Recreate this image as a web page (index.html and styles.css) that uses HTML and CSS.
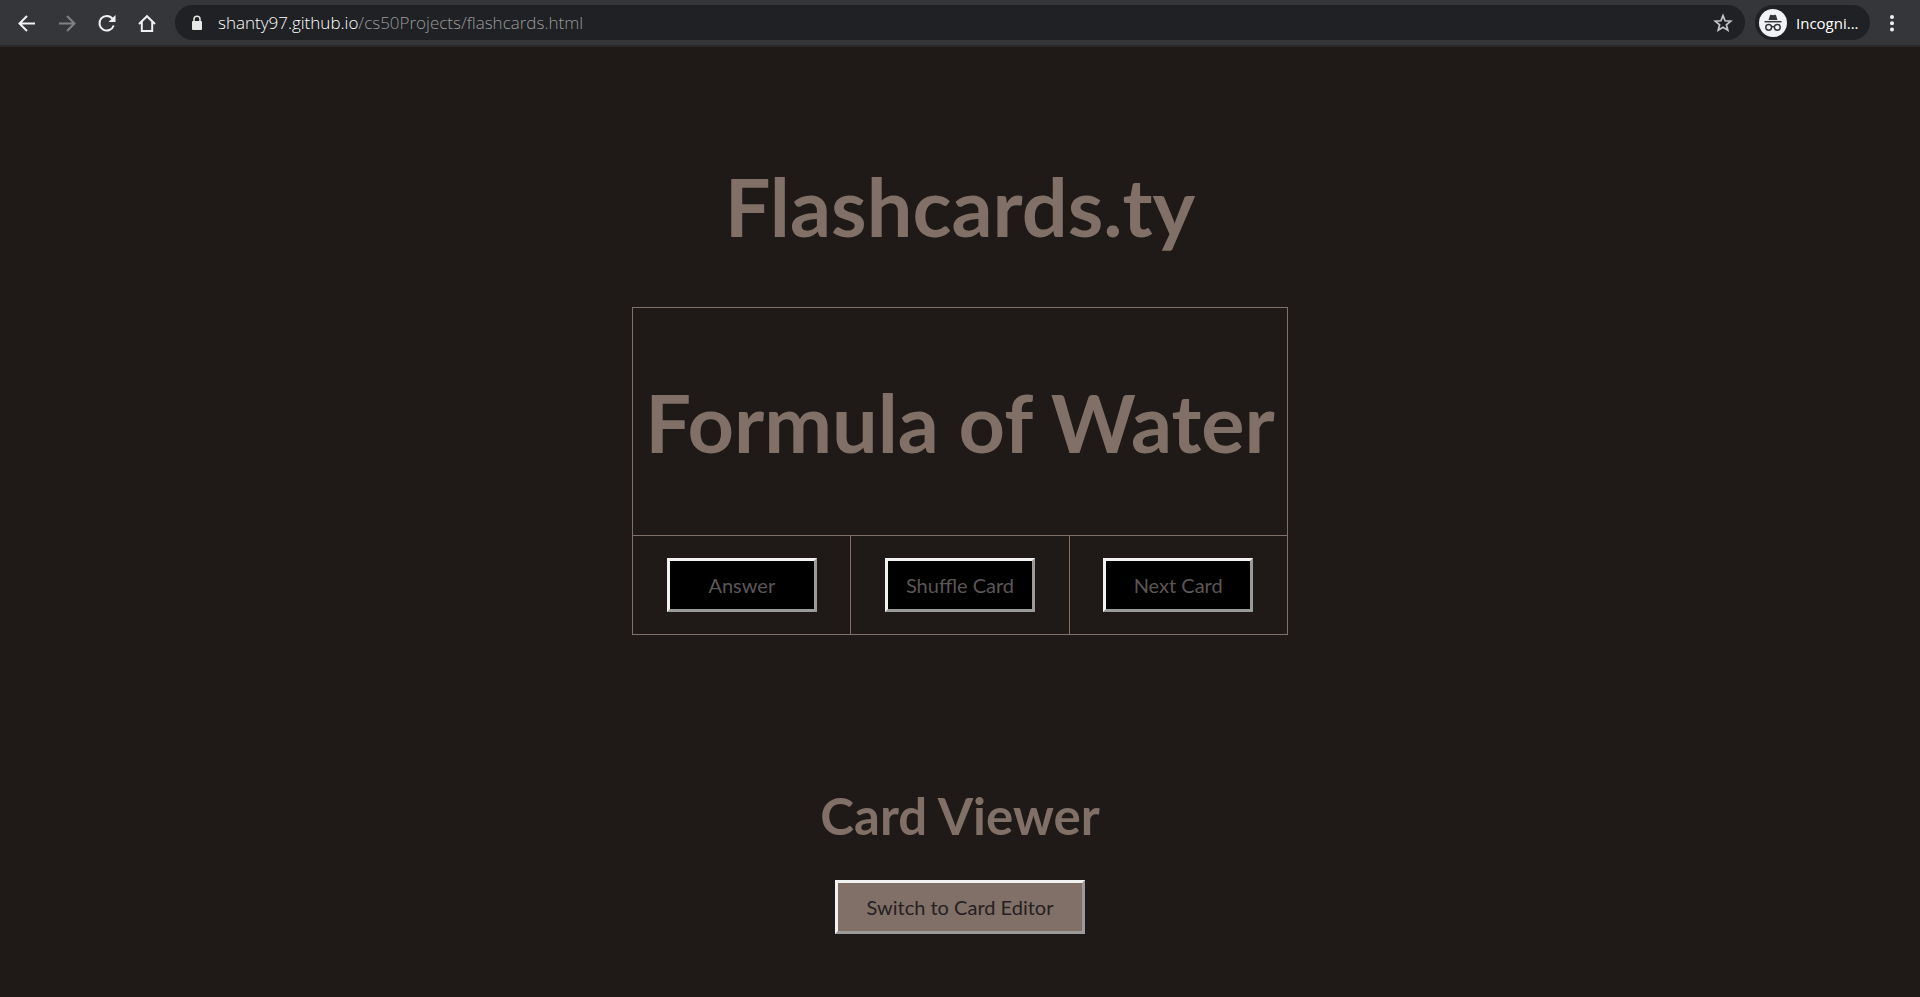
FILE: index.html
```html
<!DOCTYPE html>
<html lang="en">
<head>
<meta charset="utf-8">
<title>Flashcards.ty</title>
<link rel="stylesheet" href="styles.css">
</head>
<body>
<header class="toolbar">
  <nav class="nav" aria-label="Browser">
    <button class="icon-btn" type="button" aria-label="Back"><svg width="20" height="20" viewBox="0 0 20 20"><path d="M18 10.500H3M10 3 2.500 10.500 10 18" fill="none" stroke="#f1f1f1" stroke-width="2"/></svg></button>
    <button class="icon-btn" type="button" aria-label="Forward"><svg width="20" height="20" viewBox="0 0 20 20"><path d="M2 10.500H17M10 3l7.500 7.500L10 18" fill="none" stroke="#808184" stroke-width="2"/></svg></button>
    <button class="icon-btn" type="button" aria-label="Reload"><svg width="20" height="20" viewBox="0 0 20 20"><path d="M16.700 12.500A7.300 7.300 0 1 1 15.500 5.700" fill="none" stroke="#f1f1f1" stroke-width="2"/><path d="M18.500 2v7h-7z" fill="#f1f1f1"/></svg></button>
    <button class="icon-btn" type="button" aria-label="Home"><svg width="20" height="20" viewBox="0 0 20 20"><path d="M2 11 10 3.200 18 11M4.800 9v9h10.400V9" fill="none" stroke="#f1f1f1" stroke-width="2"/></svg></button>
  </nav>
  <div class="address">
    <svg class="lock" width="12" height="16" viewBox="0 0 12 16"><path d="M3 7V4.300a3 3 0 0 1 6 0V7" fill="none" stroke="#e8e8e8" stroke-width="1.500"/><rect x="1" y="6" width="10" height="9" rx="1" fill="#e8e8e8"/></svg>
    <div class="url" role="textbox" aria-label="Address"><span class="host">shanty97.github.io</span>/cs50Projects/flashcards.html</div>
    <button class="icon-btn" type="button" aria-label="Bookmark"><svg width="20" height="20" viewBox="0 0 20 20"><path d="m10 2.600 2.100 5.200 5.600.4-4.300 3.600 1.400 5.400L10 14.200l-4.800 3 1.400-5.400-4.300-3.600 5.600-.4z" fill="none" stroke="#c4c5c7" stroke-width="1.700"/></svg></button>
  </div>
  <button class="profile" type="button">
    <svg width="28" height="28" viewBox="0 0 28 28"><circle cx="14" cy="14" r="14" fill="#f1f3f4"/><path d="M9.500 11 11 6.300q.3-.9 1.200-.6l1.800.5 1.800-.5q.9-.3 1.200.6L18.500 11z" fill="#35363a"/><path d="M5.500 12.700h17" stroke="#35363a" stroke-width="1.500"/><g fill="none" stroke="#35363a" stroke-width="1.500"><circle cx="9.700" cy="18.300" r="2.900"/><circle cx="18.300" cy="18.300" r="2.900"/><path d="M12.600 18q1.400-1 2.800 0"/></g></svg>
    <span>Incogni...</span>
  </button>
  <button class="icon-btn" type="button" aria-label="Menu"><svg width="20" height="20" viewBox="0 0 20 20"><g fill="#f1f1f1"><circle cx="10" cy="4" r="2"/><circle cx="10" cy="10.200" r="2"/><circle cx="10" cy="16.500" r="2"/></g></svg></button>
</header>
<main class="page">
  <h1 class="title">Flashcards.ty</h1>
  <table class="deck">
    <tr><td colspan="3"><h1 class="title">Formula of Water</h1></td></tr>
    <tr>
      <td><button class="btn" type="button">Answer</button></td>
      <td><button class="btn" type="button">Shuffle Card</button></td>
      <td><button class="btn" type="button">Next Card</button></td>
    </tr>
  </table>
  <h2 class="mode">Card Viewer</h2>
  <button class="btn btn-switch" type="button">Switch to Card Editor</button>
</main>
</body>
</html>
```
FILE: styles.css
```css
* {
  box-sizing: border-box;
}

body {
  margin: 0;
  background: #1f1a17;
  color: #807067;
  font-family: Lato, "Liberation Sans", sans-serif;
}

.toolbar {
  display: flex;
  align-items: center;
  padding: 5px 18px 5px 17px;
  background: #35363a;
  border-bottom: 2px solid #29292b;
}

.nav {
  display: flex;
  gap: 20px;
  margin-right: 18px;
}

.icon-btn {
  display: flex;
  padding: 0;
  border: 0;
  background: none;
}

.address {
  display: flex;
  flex: 1;
  align-items: center;
  height: 35px;
  padding: 0 12px 0 16px;
  border-radius: 18px;
  background: #202124;
}

.lock {
  margin-right: 15px;
}

.url {
  flex: 1;
  color: #9a9b9d;
  font-family: "Open Sans", sans-serif;
  font-size: 17px;
  font-weight: 300;
}

.host {
  color: #fff;
}

.profile {
  display: flex;
  align-items: center;
  gap: 9px;
  width: 115px;
  height: 35px;
  margin: 0 12px 0 10px;
  padding: 0 0 0 4px;
  border: 0;
  border-radius: 18px;
  background: #202124;
  color: #fff;
  font-family: "Open Sans", sans-serif;
  font-size: 15px;
}

.page {
  display: flex;
  flex-direction: column;
  align-items: center;
  padding-top: 57px;
}

.title {
  margin: 53px 0;
  font-size: 81px;
  line-height: 97px;
}

.deck {
  border-collapse: collapse;
  text-align: center;
}

.deck td {
  padding: 12px;
  border: 1px solid #807067;
}

.btn {
  width: 150px;
  height: 54px;
  margin: 10px;
  padding: 0;
  border: 3px solid;
  border-color: #f2f2f2 #9a9a9a #9a9a9a #f2f2f2;
  background: #000;
  color: #5c5657;
  font-family: inherit;
  font-size: 20px;
}

.mode {
  margin: 150px 0 24px;
  font-size: 51px;
  line-height: 61px;
}

.btn-switch {
  width: 250px;
  background: #807067;
  color: #262022;
}
```
